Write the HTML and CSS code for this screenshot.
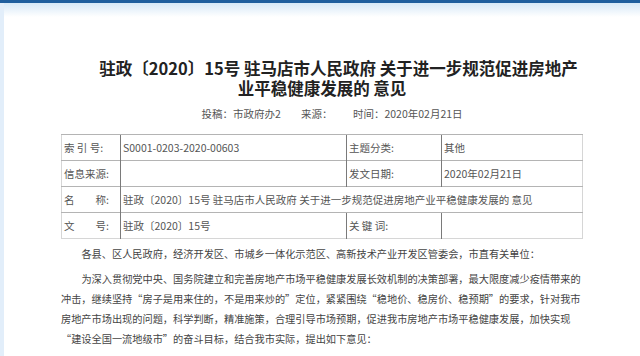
FILE: index.html
```html
<!DOCTYPE html>
<html lang="zh-CN">
<head>
    <meta charset="UTF-8">
    <meta name="viewport" content="width=device-width, initial-scale=1.0">
    <title>驻政〔2020〕15号 驻马店市人民政府 关于进一步规范促进房地产业平稳健康发展的 意见</title>
    <link rel="stylesheet" href="styles.css">
</head>
<body>
    <div class="top-bar"></div>
    <div class="wrap">
        <div class="article">
            <h1 class="title">驻政〔2020〕15号 驻马店市人民政府 关于进一步规范促进房地产<br>业平稳健康发展的 意见</h1>
            <div class="meta">
                <span class="meta-item">投稿：市政府办2</span>
                <span class="meta-item">来源：</span>
                <span>时间：2020年02月21日</span>
            </div>

            <table class="info">
                <tr>
                    <td class="label">索 引 号:</td>
                    <td class="value">S0001-0203-2020-00603</td>
                    <td class="label">主题分类:</td>
                    <td class="value">其他</td>
                </tr>
                <tr>
                    <td class="label">信息来源:</td>
                    <td class="value"></td>
                    <td class="label">发文日期:</td>
                    <td class="value">2020年02月21日</td>
                </tr>
                <tr>
                    <td class="label">名&emsp;&emsp;称:</td>
                    <td class="value" colspan="3">驻政〔2020〕15号 驻马店市人民政府 关于进一步规范促进房地产业平稳健康发展的 意见</td>
                </tr>
                <tr>
                    <td class="label">文&emsp;&emsp;号:</td>
                    <td class="value">驻政〔2020〕15号</td>
                    <td class="label">关 键 词:</td>
                    <td class="value"></td>
                </tr>
            </table>

            <div class="content">
                <p>各县、区人民政府，经济开发区、市城乡一体化示范区、高新技术产业开发区管委会，市直有关单位：</p>
                <p>为深入贯彻党中央、国务院建立和完善房地产市场平稳健康发展长效机制的决策部署，最大限度减少疫情带来的冲击，继续坚持“房子是用来住的，不是用来炒的”定位，紧紧围绕“稳地价、稳房价、稳预期”的要求，针对我市房地产市场出现的问题，科学判断，精准施策，合理引导市场预期，促进我市房地产市场平稳健康发展，加快实现“建设全国一流地级市”的奋斗目标，结合我市实际，提出如下意见：</p>
            </div>
        </div>
    </div>
</body>
</html>
```

FILE: styles.css
```css
body {
    font-family: "Noto Sans CJK SC", "Liberation Sans", sans-serif;
    margin: 0;
    padding: 0;
    background-color: white;
    color: #444;
}
.top-bar {
    height: 3px;
    background-color: #1f5f9e;
}
.wrap {
    border-left: 4px solid #e2eefa;
    background: linear-gradient(#d6e9f8, #ffffff 14px);
    height: 353px;
    overflow: hidden;
}
.article {
    width: 522px;
    margin: 0 auto;
    padding-top: 55px;
}
.title {
    margin: 0;
    font-size: 16.5px;
    line-height: 20px;
    font-weight: bold;
    color: #222;
    text-align: center;
    text-indent: 33px;
}
.meta {
    margin-top: 8px;
    font-size: 10.5px;
    line-height: 16px;
    color: #555;
    text-align: center;
    padding-left: 20px;
}
.meta-item {
    margin-right: 18px;
}
.info {
    width: 100%;
    margin-top: 12px;
    table-layout: fixed;
    border-collapse: collapse;
    border: 1px solid #d6d6d6;
    font-size: 10.5px;
    color: #555;
}
.info td {
    height: 25px;
    padding: 0 2px;
    border-top: 1px solid #b4b4b4;
    white-space: nowrap;
    overflow: hidden;
}
.info td + td {
    border-left: 1px solid #7a7a7a;
}
.info td:nth-child(1) {
    width: 54px;
}
.info td:nth-child(2) {
    width: 221px;
}
.info td:nth-child(3) {
    width: 90px;
}
.content {
    font-size: 10.2px;
    line-height: 20px;
    color: #444;
}
.content p {
    margin: 5px 0 0;
    text-indent: 2em;
}
```
